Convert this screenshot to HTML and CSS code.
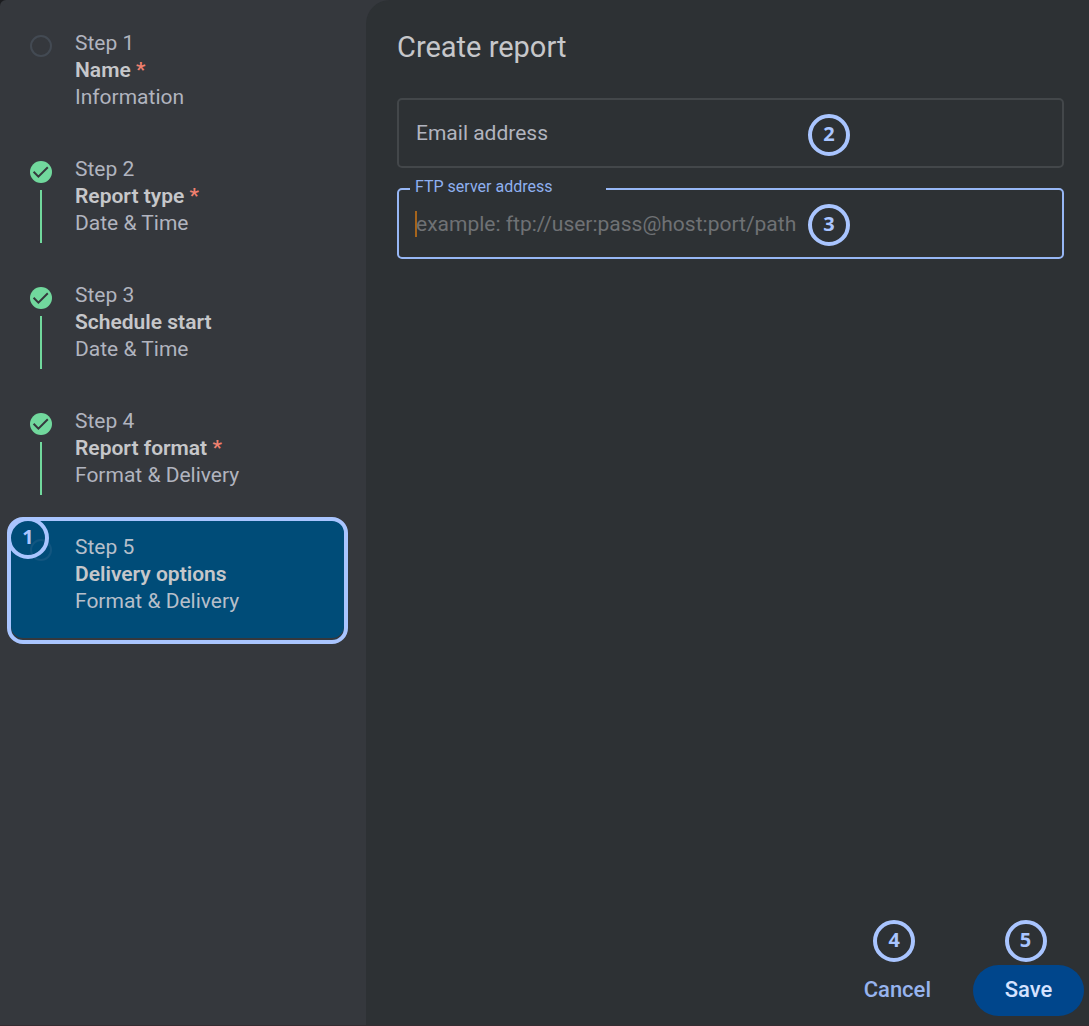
FILE: index.html
```html
<!DOCTYPE html>
<html lang="en">
<head>
    <meta charset="UTF-8">
    <meta name="viewport" content="width=device-width, initial-scale=1.0">
    <title>Create report</title>
    <link rel="stylesheet" href="styles.css">
</head>
<body>
    <div class="dialog">
        <nav class="sidebar">
            <ol class="steps">
                <li class="step">
                    <div class="step-marker">
                        <svg class="step-icon" viewBox="0 0 22 22"><circle class="ring" cx="11" cy="11" r="10"/></svg>
                    </div>
                    <div class="step-text">
                        <span>Step 1</span>
                        <strong>Name <em class="required">*</em></strong>
                        <span>Information</span>
                    </div>
                </li>
                <li class="step done">
                    <div class="step-marker">
                        <svg class="step-icon" viewBox="0 0 22 22"><circle class="disc" cx="11" cy="11" r="11"/><path class="check" d="M3.6 10.8l4.8 4.8 9.4-9.4"/></svg>
                    </div>
                    <div class="step-text">
                        <span>Step 2</span>
                        <strong>Report type <em class="required">*</em></strong>
                        <span>Date &amp; Time</span>
                    </div>
                </li>
                <li class="step done">
                    <div class="step-marker">
                        <svg class="step-icon" viewBox="0 0 22 22"><circle class="disc" cx="11" cy="11" r="11"/><path class="check" d="M3.6 10.8l4.8 4.8 9.4-9.4"/></svg>
                    </div>
                    <div class="step-text">
                        <span>Step 3</span>
                        <strong>Schedule start</strong>
                        <span>Date &amp; Time</span>
                    </div>
                </li>
                <li class="step done">
                    <div class="step-marker">
                        <svg class="step-icon" viewBox="0 0 22 22"><circle class="disc" cx="11" cy="11" r="11"/><path class="check" d="M3.6 10.8l4.8 4.8 9.4-9.4"/></svg>
                    </div>
                    <div class="step-text">
                        <span>Step 4</span>
                        <strong>Report format <em class="required">*</em></strong>
                        <span>Format &amp; Delivery</span>
                    </div>
                </li>
                <li class="step active" aria-current="step">
                    <div class="step-marker">
                        <svg class="step-icon" viewBox="0 0 22 22"><circle class="ring" cx="11" cy="11" r="10"/></svg>
                    </div>
                    <div class="step-text">
                        <span>Step 5</span>
                        <strong>Delivery options</strong>
                        <span>Format &amp; Delivery</span>
                    </div>
                    <span class="badge badge-step">1</span>
                </li>
            </ol>
        </nav>

        <main class="content">
            <h1>Create report</h1>
            <form class="form">
                <div class="field">
                    <input type="email" id="email" placeholder="Email address" aria-label="Email address">
                    <span class="badge badge-field">2</span>
                </div>
                <div class="field focused">
                    <label for="ftp">FTP server address</label>
                    <input type="text" id="ftp" placeholder="example: ftp://user:pass@host:port/path">
                    <span class="caret"></span>
                    <span class="badge badge-field">3</span>
                </div>
                <div class="actions">
                    <div class="action">
                        <span class="badge">4</span>
                        <button type="button" class="btn">Cancel</button>
                    </div>
                    <div class="action">
                        <span class="badge">5</span>
                        <button type="submit" class="btn btn-primary">Save</button>
                    </div>
                </div>
            </form>
        </main>
    </div>
</body>
</html>
```
FILE: styles.css
```css
* {
    box-sizing: border-box;
}
body {
    margin: 0;
    background-color: #1b1c1f;
    font-family: Roboto, sans-serif;
    font-size: 21px;
    line-height: 27px;
    color: #b9bbc2;
}
.dialog {
    display: flex;
    min-height: 100vh;
    background-color: #35383d;
    border-bottom: 1px solid #352c31;
    border-top-left-radius: 6px;
}

/* Sidebar */
.sidebar {
    flex: 0 0 366px;
    padding: 13px 18px 13px 7px;
}
.steps {
    list-style: none;
    margin: 0;
    padding: 0;
}
.step {
    position: relative;
    display: flex;
    gap: 23px;
    height: 126px;
    padding: 17px 23px 0;
}
.step-marker {
    display: flex;
    flex-direction: column;
    align-items: center;
    gap: 7px;
    padding-top: 5px;
}
.step-icon {
    width: 22px;
    height: 22px;
}
.done .step-marker::after {
    content: "";
    width: 2px;
    height: 53px;
    background-color: #71d89d;
}
.ring {
    fill: none;
    stroke: #434a53;
    stroke-width: 2;
}
.disc {
    fill: #71d89d;
}
.check {
    fill: none;
    stroke: #35383d;
    stroke-width: 2;
}
.step-text {
    display: flex;
    flex-direction: column;
}
.step-text span {
    color: #b1b4bf;
}
.step-text strong {
    font-weight: 600;
    color: #c6c7ca;
}
.required {
    font-style: normal;
    color: #f0806f;
}
.step.active {
    height: 127px;
    padding: 13px 19px 0;
    border: 4px solid #a9c5ff;
    border-radius: 16px;
    background-color: #004c78;
    box-shadow: inset 0 -2px 0 #35383d;
}
.active .step-text span {
    color: #b6bfca;
}
.active .ring {
    stroke: #125680;
}

/* Numbered callouts */
.badge {
    display: flex;
    align-items: center;
    justify-content: center;
    width: 42px;
    height: 42px;
    padding-bottom: 3px;
    border: 4px solid #a9c5ff;
    border-radius: 50%;
    font-family: "Noto Sans", sans-serif;
    font-size: 20px;
    font-weight: 700;
    color: #a9c5ff;
}
.badge-step {
    position: absolute;
    top: -4px;
    left: -4px;
}
.badge-field {
    position: absolute;
    top: 16px;
    right: 214px;
}

/* Form */
.content {
    flex: 1;
    display: flex;
    flex-direction: column;
    padding: 29px 5px 9px 31px;
    background-color: #2d3134;
    border-top-left-radius: 24px;
}
h1 {
    margin: 0 0 33px;
    font-size: 29px;
    font-weight: 400;
    line-height: 36px;
    color: #c6c7ca;
}
.form {
    flex: 1;
    display: flex;
    flex-direction: column;
    gap: 20px;
}
.field {
    position: relative;
    margin-right: 20px;
}
.field input {
    display: block;
    width: 100%;
    height: 70px;
    padding: 0 17px;
    border: 2px solid #43474a;
    border-radius: 5px;
    outline: none;
    background: none;
    font: inherit;
    color: #c6c7ca;
}
.field input::placeholder {
    color: #b1b4bf;
    opacity: 1;
}
.focused input {
    height: 71px;
    border-color: #97b7f5;
}
.focused input::placeholder {
    color: #6f7174;
}
.field label {
    position: absolute;
    top: -11px;
    left: 13px;
    width: 196px;
    padding-left: 5px;
    background-color: #2d3134;
    font-size: 16px;
    line-height: 20px;
    color: #8fb0f0;
}
.caret {
    position: absolute;
    top: 23px;
    left: 18px;
    width: 2px;
    height: 26px;
    background-color: #a5641c;
}

/* Buttons */
.actions {
    display: flex;
    justify-content: flex-end;
    gap: 22px;
    margin-top: auto;
}
.action {
    display: flex;
    flex-direction: column;
    align-items: center;
    gap: 3px;
}
.action .badge {
    margin-right: 6px;
}
.btn {
    height: 51px;
    padding: 0 20px 2px;
    border: none;
    border-radius: 26px;
    background: none;
    font: inherit;
    font-size: 22px;
    font-weight: 500;
    color: #97b4ee;
    cursor: pointer;
}
.btn-primary {
    min-width: 111px;
    background-color: #00468c;
    color: #d5e2ff;
}
```
